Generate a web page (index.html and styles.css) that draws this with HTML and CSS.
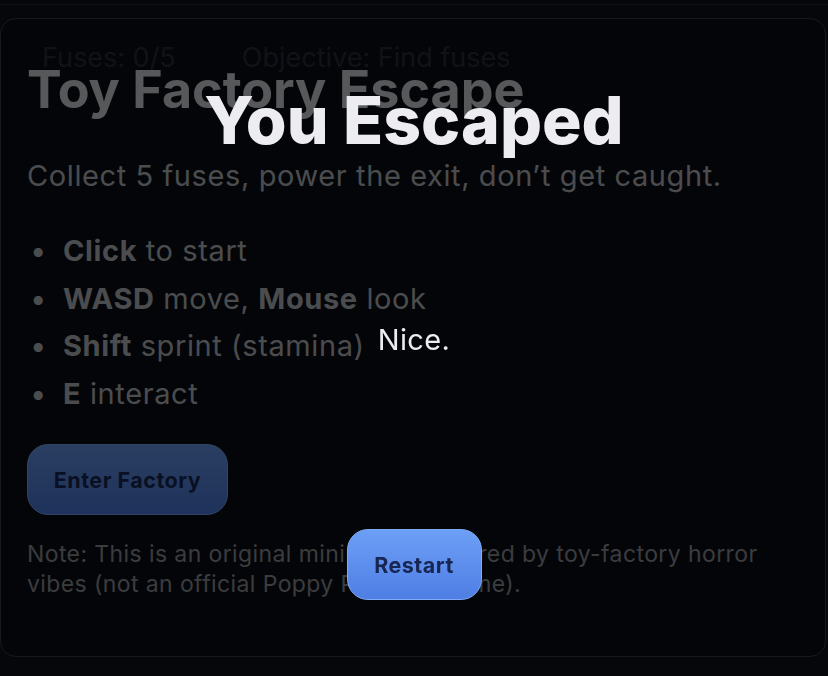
FILE: index.html
```html
<!DOCTYPE html>
<html lang="en">
<head>
    <meta charset="UTF-8">
    <meta name="viewport" content="width=device-width, initial-scale=1.0">
    <title>Toy Factory Escape</title>
    <link rel="stylesheet" href="styles.css">
</head>
<body>
    <div class="topbar"></div>
    <div class="game">
        <!-- HUD sits over the scene -->
        <div class="hud">
            <span class="hud-item">Fuses: 0/5</span>
            <span class="hud-item">Objective: Find fuses</span>
        </div>
        <div class="menu">
            <h1>Toy Factory Escape</h1>
            <p class="lead">Collect 5 fuses, power the exit, don&rsquo;t get caught.</p>
            <ul class="controls">
                <li><b>Click</b> to start</li>
                <li><b>WASD</b> move, <b>Mouse</b> look</li>
                <li><b>Shift</b> sprint (stamina)</li>
                <li><b>E</b> interact</li>
            </ul>
            <button class="btn">Enter Factory</button>
            <p class="note">Note: This is an original mini-game inspired by toy-factory horror vibes (not an official Poppy Playtime game).</p>
        </div>
    </div>
    <!-- End screen -->
    <div class="overlay">
        <h2 class="end-title">You Escaped</h2>
        <p class="end-text">Nice.</p>
        <button class="btn">Restart</button>
    </div>
</body>
</html>
```

FILE: styles.css
```css
body {
    font-family: Inter, "Noto Sans", sans-serif;
    margin: 0;
    padding: 0;
    background-color: #0d0e13;
    color: #dcdcdc;
    height: 676px;
    overflow: hidden;
}
.topbar {
    height: 4px;
    border-bottom: 1px solid #2a2c33;
    margin-bottom: 13px;
}
.game {
    position: relative;
    height: 639px;
    margin-right: 2px;
    box-sizing: border-box;
    border: 1px solid #3c3e46;
    border-radius: 16px;
    background-color: #08090d;
}
.hud {
    position: absolute;
    top: 22px;
    left: 41px;
    display: flex;
    gap: 66px;
}
.hud-item {
    font-size: 27px;
    color: #2b2c31;
}
.menu {
    padding: 43px 28px 0 26px;
}
.menu h1 {
    font-size: 52px;
    font-weight: 700;
    line-height: 55px;
    margin: 0;
    color: #e2e2e2;
}
.lead {
    font-size: 29px;
    line-height: 36px;
    letter-spacing: 0.6px;
    margin: 41px 0 0;
    color: #c2c2c2;
}
.controls {
    list-style: none;
    margin: 33px 0 0;
    padding: 0;
    font-size: 29px;
    line-height: 47.5px;
    letter-spacing: 0.6px;
    color: #c2c2c2;
}
.controls li::before {
    content: "\2022";
    display: inline-block;
    width: 33px;
    padding-left: 3px;
}
.controls b {
    font-weight: 700;
}
.btn {
    font-family: inherit;
    font-size: 21.5px;
    font-weight: 700;
    letter-spacing: 0.5px;
    white-space: nowrap;
    color: #172752;
    padding: 0;
    height: 71px;
    border: 1px solid #7eaaf8;
    border-radius: 21px;
    background: linear-gradient(#6d9ff6, #4f7ee4);
    cursor: pointer;
}
.menu .btn {
    margin-top: 27px;
    width: 201px;
}
.note {
    font-size: 23px;
    line-height: 30px;
    letter-spacing: 0.4px;
    margin: 24px 0 0;
    color: #989898;
}
.overlay {
    position: fixed;
    inset: 0;
    padding-top: 8px;
    display: flex;
    flex-direction: column;
    align-items: center;
    justify-content: center;
    background: rgba(2, 3, 6, 0.62);
    text-align: center;
}
.end-title {
    font-size: 66px;
    font-weight: 800;
    line-height: 73px;
    margin: 0 0 166px;
    color: #ececf1;
}
.end-text {
    font-size: 29px;
    line-height: 34px;
    letter-spacing: 0.4px;
    margin: 0 0 172px;
    color: #ececf1;
}
.overlay .btn {
    width: 135px;
}
```
